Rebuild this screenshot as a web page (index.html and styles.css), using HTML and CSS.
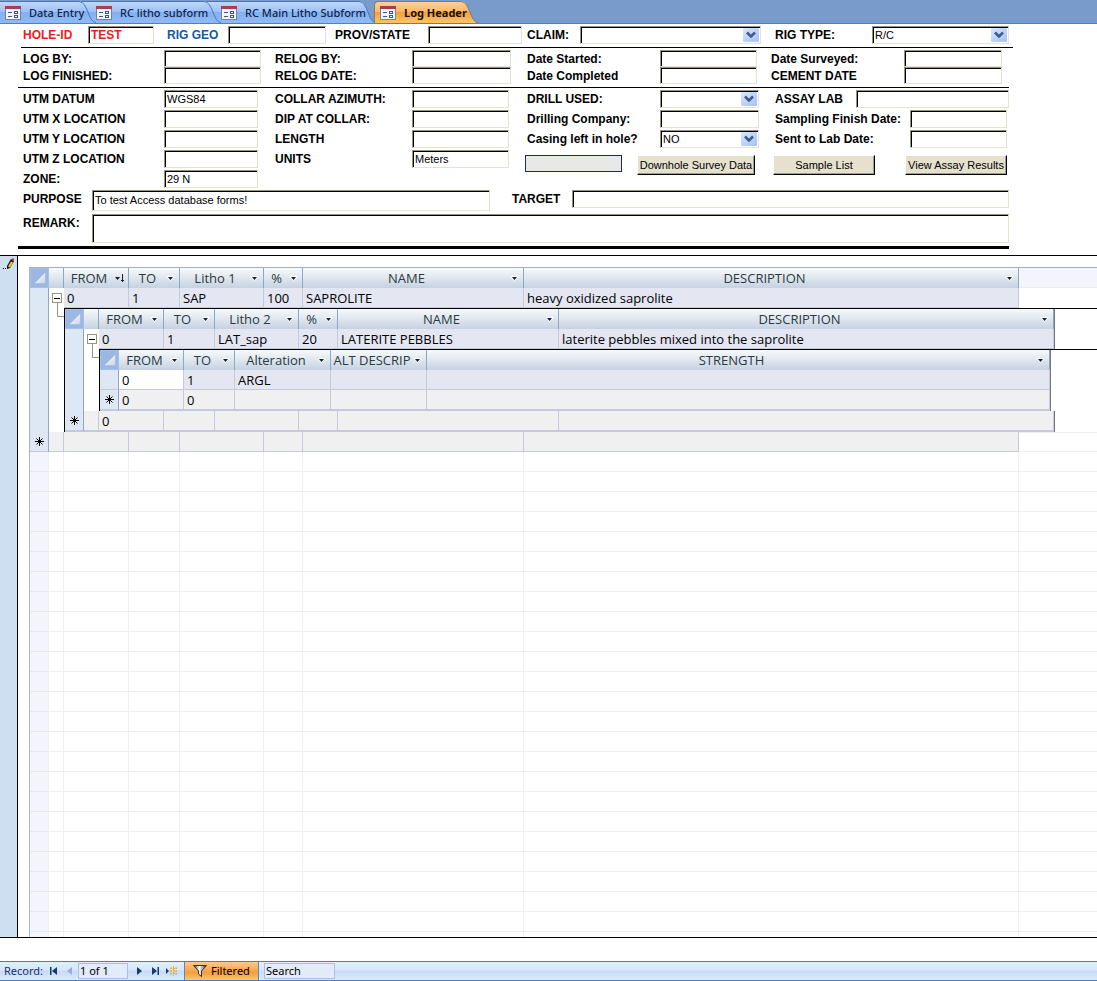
FILE: index.html
```html
<!DOCTYPE html>
<html lang="en">
<head>
<meta charset="utf-8">
<title>Log Header</title>
<link rel="stylesheet" href="styles.css">
</head>
<body>
<svg class="defs" aria-hidden="true">
  <defs>
    <linearGradient id="blue" x1="0" y1="0" x2="0" y2="1"><stop offset="0" stop-color="#bdd7fb"/><stop offset=".45" stop-color="#9dc2f6"/><stop offset=".5" stop-color="#83b0f0"/><stop offset="1" stop-color="#8fbaf5"/></linearGradient>
    <linearGradient id="orange" x1="0" y1="0" x2="0" y2="1"><stop offset="0" stop-color="#fbd09a"/><stop offset=".45" stop-color="#fbb968"/><stop offset=".5" stop-color="#f79f3a"/><stop offset="1" stop-color="#fdc468"/></linearGradient>
    <linearGradient id="corner" x1="0" y1="0" x2="1" y2="1"><stop offset="0" stop-color="#fff"/><stop offset="1" stop-color="#ccd5e6"/></linearGradient>
    <linearGradient id="arrow" x1="0" y1="0" x2="1" y2="1"><stop offset="0" stop-color="#d9e6fe"/><stop offset="1" stop-color="#a5c0f6"/></linearGradient>
    <linearGradient id="metal"><stop offset="0" stop-color="#333"/><stop offset=".45" stop-color="#fff"/><stop offset="1" stop-color="#333"/></linearGradient>
    <symbol id="form" viewBox="0 0 16 16"><rect x=".5" y="1.5" width="15" height="13" fill="#f1f4fb" stroke="#7181a8"/><path d="M0 1h16v3H0z" fill="#a83c55"/><path d="M3 7.500h4M3 11.500h4" stroke="#405580"/><path d="M9 6.500h4M9 8.500h4M9 10.500h4M9 12.500h4M9.500 6v3M12.500 6v3M9.500 10v3M12.500 10v3" stroke="#405580"/></symbol>
    <symbol id="drop" viewBox="0 0 16 14"><rect width="16" height="14" rx="1" fill="url(#arrow)"/><path d="M4 4.500l4 4 4-4" fill="none" stroke="#405a88" stroke-width="2.500"/></symbol>
    <symbol id="all" viewBox="0 0 18 19"><path d="M15 4v11H4z" fill="url(#corner)"/></symbol>
    <symbol id="caret" viewBox="0 0 9 5"><path d="M0 0h9L4.500 5z" fill="#fff"/><path d="M2 1h5L4.500 4z" fill="#16202c"/></symbol>
    <symbol id="tree" viewBox="0 0 15 30"><path d="M8.500 15v13.500H15" fill="none" stroke="#9a947e"/><rect x="3.500" y="5.500" width="9" height="9" fill="#fff" stroke="#9a947e"/><path d="M5 10.500h6" stroke="#000"/></symbol>
    <symbol id="star" viewBox="0 0 11 11"><path d="M5.500 1v9M1 5.500h9M2.500 2.500l6 6M8.500 2.500l-6 6" stroke="#000"/></symbol>
  </defs>
</svg>

<nav class="tabs" aria-label="Open forms">
  <button class="tab tab-first"><svg class="form-icon"><use href="#form"/></svg><span>Data Entry</span><svg class="cap" viewBox="0 0 18 22"><path d="M0 0C9 0 9 22 17 22H0z" fill="url(#blue)"/><path d="M0 .500C9 .500 9 21.500 17 21.500" fill="none" stroke="#4c76b4"/></svg></button>
  <button class="tab tab-second"><svg class="form-icon"><use href="#form"/></svg><span>RC litho subform</span><svg class="cap" viewBox="0 0 18 22"><path d="M0 0C9 0 9 22 17 22H0z" fill="url(#blue)"/><path d="M0 .500C9 .500 9 21.500 17 21.500" fill="none" stroke="#4c76b4"/></svg></button>
  <button class="tab tab-third"><svg class="form-icon"><use href="#form"/></svg><span>RC Main Litho Subform</span><svg class="cap" viewBox="0 0 18 22"><path d="M0 0C9 0 9 22 17 22H0z" fill="url(#blue)"/><path d="M0 .500C9 .500 9 21.500 17 21.500" fill="none" stroke="#4c76b4"/></svg></button>
  <button class="tab tab-active"><svg class="form-icon"><use href="#form"/></svg><span>Log Header</span><svg class="cap" viewBox="0 0 18 22"><path d="M0 0C9 0 9 22 17 22H0z" fill="url(#orange)"/><path d="M0 .500C9 .500 9 21.500 17 21.500" fill="none" stroke="#8a7868"/></svg></button>
</nav>

<main>
<form class="log">
  <section class="ids">
    <div class="field f-hole"><label for="hole">HOLE-ID</label><input id="hole" value="TEST"></div>
    <div class="field f-geo"><label for="geo">RIG GEO</label><input id="geo"></div>
    <div class="field f-prov"><label for="prov">PROV/STATE</label><input id="prov"></div>
    <div class="field f-claim"><label for="claim">CLAIM:</label><span class="combo"><select id="claim"><option></option></select><svg><use href="#drop"/></svg></span></div>
    <div class="field f-rig"><label for="rig">RIG TYPE:</label><span class="combo"><select id="rig"><option>R/C</option></select><svg><use href="#drop"/></svg></span></div>
  </section>
  <section class="dates">
    <div class="field f-a"><label for="logby">LOG BY:</label><input id="logby"></div>
    <div class="field f-b"><label for="relog">RELOG BY:</label><input id="relog"></div>
    <div class="field f-c"><label for="started">Date Started:</label><input id="started"></div>
    <div class="field f-surveyed"><label for="surveyed">Date Surveyed:</label><input id="surveyed"></div>
    <div class="field f-a"><label for="fin">LOG FINISHED:</label><input id="fin"></div>
    <div class="field f-b"><label for="reldate">RELOG DATE:</label><input id="reldate"></div>
    <div class="field f-c"><label for="comp">Date Completed</label><input id="comp"></div>
    <div class="field f-surveyed"><label for="cement">CEMENT DATE</label><input id="cement"></div>
  </section>
  <section class="details">
    <div class="stack">
      <div class="field f-loc"><label for="datum">UTM DATUM</label><input id="datum" value="WGS84"></div>
      <div class="field f-loc"><label for="ux">UTM X LOCATION</label><input id="ux"></div>
      <div class="field f-loc"><label for="uy">UTM Y LOCATION</label><input id="uy"></div>
      <div class="field f-loc"><label for="uz">UTM Z LOCATION</label><input id="uz"></div>
      <div class="field f-loc"><label for="zone">ZONE:</label><input id="zone" value="29 N"></div>
    </div>
    <div class="stack">
      <div class="field f-b"><label for="azi">COLLAR AZIMUTH:</label><input id="azi"></div>
      <div class="field f-b"><label for="dip">DIP AT COLLAR:</label><input id="dip"></div>
      <div class="field f-b"><label for="len">LENGTH</label><input id="len"></div>
      <div class="field f-b"><label for="units">UNITS</label><input id="units" value="Meters"></div>
    </div>
    <div class="stack inset">
      <div class="field f-c"><label for="drill">DRILL USED:</label><span class="combo"><select id="drill"><option></option></select><svg><use href="#drop"/></svg></span></div>
      <div class="field f-c"><label for="company">Drilling Company:</label><input id="company"></div>
      <div class="field f-c"><label for="casing">Casing left in hole?</label><span class="combo"><select id="casing"><option>NO</option></select><svg><use href="#drop"/></svg></span></div>
      <div class="actions"><span class="blank"></span><button type="button" class="push wide">Downhole Survey Data</button></div>
    </div>
    <div class="stack inset">
      <div class="field f-lab"><label for="lab">ASSAY LAB</label><input id="lab"></div>
      <div class="field f-d"><label for="sampling">Sampling Finish Date:</label><input id="sampling"></div>
      <div class="field f-d"><label for="sent">Sent to Lab Date:</label><input id="sent"></div>
      <div class="actions spread"><button type="button" class="push">Sample List</button><button type="button" class="push">View Assay Results</button></div>
    </div>
  </section>
  <section class="purpose">
    <div class="field f-purpose"><label for="purpose">PURPOSE</label><input id="purpose" value="To test Access database forms!"></div>
    <div class="field f-target"><label for="target">TARGET</label><input id="target"></div>
  </section>
  <section class="remark">
    <div class="field f-remark"><label for="remark">REMARK:</label><textarea id="remark"></textarea></div>
  </section>
</form>

<div class="subform">
  <div class="selector"><svg viewBox="0 0 12 12"><path d="M0 10.500h1M2 10.500h1" stroke="#000"/><path d="M4 11V8l4-7 3 2-4 7z" fill="#111"/><path d="M5 8.500l3-5 2 1-3 5z" fill="#e6cf1d"/><path d="M8 1.500l1-1h2v2l-1 1z" fill="#c23030"/></svg></div>
  <div class="sheet">
    <table class="grid">
      <colgroup><col class="w-sel"><col class="w-exp"><col class="w-from"><col class="w-to"><col class="w-litho"><col class="w-pct"><col class="w-name"><col class="w-desc"><col></colgroup>
      <tr>
        <th class="all"><svg><use href="#all"/></svg></th><th></th>
        <th><div class="head"><span>FROM</span><svg class="sorted" viewBox="0 0 11 9"><path d="M1 3h5L3.500 6z" fill="#16202c"/><path d="M8.500 0v8M7 6.500h3" stroke="#16202c"/></svg></div></th>
        <th><div class="head"><span>TO</span><svg><use href="#caret"/></svg></div></th>
        <th><div class="head"><span>Litho 1</span><svg><use href="#caret"/></svg></div></th>
        <th><div class="head"><span>%</span><svg><use href="#caret"/></svg></div></th>
        <th><div class="head"><span>NAME</span><svg><use href="#caret"/></svg></div></th>
        <th><div class="head"><span>DESCRIPTION</span><svg><use href="#caret"/></svg></div></th>
        <td class="rest tinted"></td>
      </tr>
      <tr>
        <td class="mark open"></td><td class="branch"><button class="toggle" aria-label="Collapse"><svg><use href="#tree"/></svg></button></td>
        <td>0</td><td>1</td><td>SAP</td><td>100</td><td>SAPROLITE</td><td>heavy oxidized saprolite</td><td class="rest"></td>
      </tr>
      <tr>
        <td class="mark open"></td><td class="branch"></td>
        <td colspan="7" class="host">
          <table class="grid nested">
            <colgroup><col class="w-mark"><col class="w-exp"><col class="w-from"><col class="w-to"><col class="w-litho"><col class="w-pct"><col class="w-name"><col class="w-desc"><col></colgroup>
            <tr>
              <th class="all"><svg><use href="#all"/></svg></th><th></th>
              <th><div class="head"><span>FROM</span><svg><use href="#caret"/></svg></div></th>
              <th><div class="head"><span>TO</span><svg><use href="#caret"/></svg></div></th>
              <th><div class="head"><span>Litho 2</span><svg><use href="#caret"/></svg></div></th>
              <th><div class="head"><span>%</span><svg><use href="#caret"/></svg></div></th>
              <th><div class="head"><span>NAME</span><svg><use href="#caret"/></svg></div></th>
              <th><div class="head"><span>DESCRIPTION</span><svg><use href="#caret"/></svg></div></th>
              <td class="rest edge"></td>
            </tr>
            <tr>
              <td class="mark open"></td><td class="branch"><button class="toggle" aria-label="Collapse"><svg><use href="#tree"/></svg></button></td>
              <td>0</td><td>1</td><td>LAT_sap</td><td>20</td><td>LATERITE PEBBLES</td><td>laterite pebbles mixed into the saprolite</td><td class="rest edge"></td>
            </tr>
            <tr>
              <td class="mark open"></td><td class="branch"></td>
              <td colspan="7" class="host">
                <table class="grid nested">
                  <colgroup><col class="w-mark"><col class="w-from"><col class="w-to"><col class="w-alt"><col class="w-alt"><col class="w-strength"><col></colgroup>
                  <tr>
                    <th class="all"><svg><use href="#all"/></svg></th>
                    <th><div class="head"><span>FROM</span><svg><use href="#caret"/></svg></div></th>
                    <th><div class="head"><span>TO</span><svg><use href="#caret"/></svg></div></th>
                    <th><div class="head"><span>Alteration</span><svg><use href="#caret"/></svg></div></th>
                    <th><div class="head"><span>ALT DESCRIP</span><svg><use href="#caret"/></svg></div></th>
                    <th><div class="head"><span>STRENGTH</span><svg><use href="#caret"/></svg></div></th>
                    <td class="rest edge"></td>
                  </tr>
                  <tr><td class="mark"></td><td class="current">0</td><td>1</td><td>ARGL</td><td></td><td></td><td class="rest edge"></td></tr>
                  <tr class="new last"><td class="mark"><svg><use href="#star"/></svg></td><td>0</td><td>0</td><td></td><td></td><td></td><td class="rest edge"></td></tr>
                </table>
              </td>
            </tr>
            <tr class="new last"><td class="mark"><svg><use href="#star"/></svg></td><td></td><td>0</td><td></td><td></td><td></td><td></td><td></td><td class="rest edge"></td></tr>
          </table>
        </td>
      </tr>
      <tr class="new"><td class="mark"><svg><use href="#star"/></svg></td><td></td><td></td><td></td><td></td><td></td><td></td><td></td><td class="rest lined"></td></tr>
    </table>
    <div class="empty"><i class="w-sel"></i><i class="w-exp"></i><i class="w-from"></i><i class="w-to"></i><i class="w-litho"></i><i class="w-pct"></i><i class="w-name"></i><i class="w-desc"></i></div>
  </div>
</div>
</main>

<footer class="records">
  <label for="record">Record:</label>
  <button aria-label="First"><svg viewBox="0 0 12 10"><path d="M2 1h1.500v8H2zM9 1v8L4 5z"/></svg></button>
  <button class="dim" aria-label="Previous"><svg viewBox="0 0 12 10"><path d="M8 1v8L3 5z"/></svg></button>
  <input id="record" class="count" value="1 of 1">
  <button aria-label="Next"><svg viewBox="0 0 12 10"><path d="M4 1v8l5-4z"/></svg></button>
  <button aria-label="Last"><svg viewBox="0 0 12 10"><path d="M3 1v8l5-4zM8.500 1H10v8H8.500z"/></svg></button>
  <button aria-label="New record"><svg viewBox="0 0 12 10"><path d="M1 2v6l3-3z"/><path d="M8.500 0v10M5 2.500h7M5 5h7M5 7.500h7M6 1v8M11 1v8" stroke="#e0ad32" stroke-dasharray="2 1" fill="none"/></svg></button>
  <button class="filtered"><svg viewBox="0 0 14 12"><path d="M.500.500h13L8.500 6v5.500L5.500 9V6z" fill="url(#metal)" stroke="#333"/></svg>Filtered</button>
  <input class="search" aria-label="Search" value="Search">
</footer>
</body>
</html>
```
FILE: styles.css
```css
* { box-sizing: border-box; }
body {
  margin: 0;
  min-height: 100vh;
  display: flex;
  flex-direction: column;
  background: #fff;
  color: #000;
  font: 12px/16px "Liberation Sans", Arial, sans-serif;
}
button, input, select, textarea { font: inherit; color: inherit; border-radius: 0; }
button { border: 0; padding: 0; background: none; }
.defs { position: absolute; width: 0; height: 0; }

/* Document tabs */
.tabs {
  display: flex;
  height: 24px;
  padding-top: 1px;
  background: #789bcb;
  border-bottom: 1px solid #4f81c1;
}
.tab {
  position: relative;
  display: flex;
  align-items: center;
  gap: 8px;
  height: 22px;
  padding-left: 5px;
  border-top: 1px solid #4c76b4;
  background: linear-gradient(#bdd7fb, #9dc2f6 45%, #83b0f0 50%, #8fbaf5);
  color: #13244a;
  font: 500 11px/20px "Noto Sans", Tahoma, sans-serif;
  white-space: nowrap;
}
.tab span { position: relative; z-index: 1; }
.form-icon { width: 16px; height: 16px; flex: none; }
.cap { position: absolute; left: 100%; top: -1px; width: 18px; height: 22px; }
.tab-first { width: 79px; z-index: 3; }
.tab-second { width: 125px; padding-left: 17px; z-index: 2; }
.tab-third { width: 155px; padding-left: 17px; z-index: 1; }
.tab-active {
  width: 87px;
  margin-left: 15px;
  z-index: 4;
  border-top-color: #8a7868;
  border-left: 1px solid #8a7868;
  border-top-left-radius: 4px;
  background: linear-gradient(#fbd09a, #fbb968 45%, #f79f3a 50%, #fdc468);
  color: #1b1008;
  font-weight: 700;
}

/* Header form */
main { flex: 1; display: flex; flex-direction: column; }
.log { margin: 0 88px 0 18px; padding-bottom: 6px; }
.log section { display: grid; padding-left: 5px; }
.field { display: flex; align-items: flex-start; }
.field label { flex: none; padding-top: 1px; font-weight: 700; line-height: 16px; white-space: nowrap; }
.field input, .field select, .field textarea {
  display: block;
  flex: 1;
  min-width: 0;
  width: 100%;
  height: 18px;
  margin: 0;
  padding: 0 2px;
  border: 1px solid #e8e3d0;
  border-top-color: #98937f;
  border-left-color: #98937f;
  box-shadow: inset 1px 1px #000;
  background: #fff;
  font-size: 11px;
  line-height: 15px;
  outline: 0;
  resize: none;
}
.combo { position: relative; flex: 1; min-width: 0; }
.combo select { appearance: none; }
.combo svg { position: absolute; right: 2px; top: 2px; width: 16px; height: 14px; pointer-events: none; }

.log .ids {
  grid-template-columns: 144fr 168fr 192fr 248fr 234fr;
  margin-left: 3px;
  margin-right: -4px;
  padding: 2px 4px 3px 2px;
  border-bottom: 1px solid #000;
}
.log .dates {
  grid-template-columns: 252fr 252fr 244fr 238fr;
  padding-top: 2px;
  padding-bottom: 3px;
  border-bottom: 1px solid #000;
}
.dates .field input { height: 17px; }
.log .details { grid-template-columns: 252fr 250fr 248fr 236fr; padding-top: 2px; padding-bottom: 2px; }
.log .purpose { grid-template-columns: 489fr 497fr; }
.log .remark { padding-top: 3px; padding-bottom: 3px; border-bottom: 3px solid #000; }
.stack { display: flex; flex-direction: column; gap: 2px; }
.stack .field { height: 18px; }
.inset .field { padding-left: 2px; }

.f-hole { padding-right: 13px; }
.f-hole label { width: 65px; }
.f-hole, .f-hole input { color: #ed1c24; }
.ids .f-hole input { font-weight: 700; font-size: 12px; }
.f-geo { padding-right: 9px; }
.f-geo label { width: 61px; color: #1158a7; }
.f-prov { padding-right: 5px; }
.f-prov label { width: 93px; }
.f-claim { padding-right: 14px; }
.f-claim label { width: 53px; }
.f-rig label { width: 97px; }
.f-a { padding-right: 14px; }
.f-a label, .f-loc label { width: 141px; }
.f-loc { padding-right: 17px; }
.f-b { padding-right: 16px; }
.f-b label { width: 137px; }
.f-c { padding-right: 14px; }
.f-c label { width: 133px; }
.f-surveyed { padding-right: 7px; }
.f-surveyed label { width: 133px; }
.f-lab label { width: 81px; }
.f-d { padding-right: 2px; }
.f-d label { width: 135px; }
.f-purpose { padding-right: 22px; }
.f-purpose label, .f-remark label { width: 69px; }
.f-purpose input { height: 21px; padding-bottom: 2px; }
.f-target label { width: 60px; }
.f-remark textarea { height: 29px; }

.actions { display: flex; gap: 15px; padding: 5px 18px 0 0; align-items: flex-start; }
.actions.spread { justify-content: space-between; padding-right: 2px; }
.blank { width: 97px; height: 17px; border: 1px solid #1c2c4c; background: #e8e8e8; }
.push {
  width: 102px;
  height: 20px;
  border: 1px solid #fff;
  border-right-color: #000;
  border-bottom-color: #000;
  box-shadow: inset -1px -1px #a39e8a;
  background: #e6e1cf;
  font-size: 11px;
  line-height: 16px;
  white-space: nowrap;
}
.push.wide { flex: 1; }

/* Datasheet */
.subform {
  flex: 1;
  display: flex;
  border-top: 1px solid #000;
  border-bottom: 1px solid #000;
}
.selector { width: 18px; flex: none; padding: 2px 0 0 3px; background: #cddff0; border-right: 1px solid #000; }
.selector svg { display: block; width: 12px; height: 12px; }
.sheet {
  flex: 1;
  min-width: 0;
  display: flex;
  flex-direction: column;
  margin: 11px 0 0 11px;
  border-top: 1px solid #a9acb2;
  border-left: 1px solid #b0b4be;
  overflow: hidden;
}
.grid {
  width: 100%;
  table-layout: fixed;
  border-collapse: separate;
  border-spacing: 0;
  font: 13px/18px "Open Sans", Calibri, sans-serif;
}
.nested { border-left: 1px solid #000; border-top: 1px solid #000; }
.w-sel { width: 19px; }
.w-mark { width: 19px; }
.w-exp { width: 15px; }
.w-from { width: 65px; }
.w-to { width: 51px; }
.w-litho { width: 84px; }
.w-pct { width: 39px; }
.w-name { width: 221px; }
.w-desc { width: 495px; }
.w-alt { width: 96px; }
.w-strength { width: 623px; }
.grid th {
  height: 20px;
  padding: 0;
  font-weight: 400;
  color: #2a3a42;
  border-right: 1px solid #8ba9c4;
  background: linear-gradient(#f6fafb, #dfe6ee 50%, #c6d1e2);
}
.grid td {
  height: 20px;
  padding: 0 3px;
  white-space: nowrap;
  background: #e4e6f2;
  border-right: 1px solid #c4cadc;
  border-bottom: 1px solid #c4cadc;
}
.head { display: flex; align-items: center; }
.head span { flex: 1; white-space: nowrap; text-align: center; }
.head svg { flex: none; width: 9px; height: 5px; margin-right: 4px; }
.head .sorted { width: 11px; height: 9px; margin-right: 3px; }
.grid .all { background: #9bb7e2; border: 1px solid #a1c1f3; }
.all svg { display: block; width: 17px; height: 18px; }
.grid td.mark { padding: 0; background: #dde8f4; border-right-color: #8ba9c4; text-align: center; }
.mark svg { display: block; width: 11px; height: 11px; margin: 0 auto; }
.grid td.open { border-bottom: 0; }
.grid td.branch { position: relative; padding: 0; background: #fff; border: 0; }
.toggle { position: absolute; z-index: 1; left: 0; top: 0; width: 15px; height: 30px; }
.toggle svg { display: block; width: 15px; height: 30px; }
.grid td.host { padding: 0; border: 0; background: #fff; }
.grid .new td { background: #f0f0f0; }
.grid .new td.mark { background: #dde8f4; }
.grid .last td { height: 21px; border-bottom-width: 2px; }
.grid td.current { background: #fff; }
.grid td.rest, .grid .new td.rest { background: #fff; border: 0; }
.grid td.rest.tinted { background: #f4f4ff; border-bottom: 1px solid #eee; }
.grid .new td.rest.lined { border-top: 1px solid #eee; border-bottom: 1px solid #eee; }
.grid td.rest.edge, .grid .new td.rest.edge { border-left: 1px solid #74777c; }
.empty {
  flex: 1;
  display: flex;
  background: repeating-linear-gradient(transparent 0 19px, #efefef 19px 20px);
}
.empty i { flex: none; border-right: 1px solid #eeeff3; }
.empty .w-sel { background: repeating-linear-gradient(#f4f4ff 0 19px, #e8e8f2 19px 20px); }

/* Record navigation */
.records {
  display: flex;
  align-items: center;
  height: 20px;
  margin-top: 23px;
  padding-left: 4px;
  border-top: 1px solid #4a7cc0;
  border-bottom: 1px solid #4a7cc0;
  background: linear-gradient(#e3edfd, #d7e6fb 45%, #c6dbf8 50%, #dbeafe);
  font: 11px/16px "Noto Sans", Tahoma, sans-serif;
  color: #000;
}
.records label { width: 42px; color: #15356e; }
.records button { width: 16px; height: 16px; fill: #143a78; }
.records button svg { display: block; width: 12px; height: 10px; margin: 0 auto; }
.records .dim { fill: #9aaed0; }
.records input {
  height: 16px;
  padding: 0 1px;
  border: 1px solid #abc0df;
  background: #e3ebf9;
  outline: 0;
}
.records .count { width: 50px; margin-right: 3px; }
.records .filtered {
  display: flex;
  align-items: center;
  gap: 4px;
  width: 75px;
  height: 18px;
  margin: 0 5px;
  padding-left: 8px;
  border: 1px solid #5a86c4;
  border-width: 0 1px;
  background: linear-gradient(#fbc98c, #f8a54a 50%, #f79a38 55%, #fdc56e);
  white-space: nowrap;
}
.records .filtered svg { width: 14px; height: 12px; margin: 0; }
.records .search { width: 71px; }
```
